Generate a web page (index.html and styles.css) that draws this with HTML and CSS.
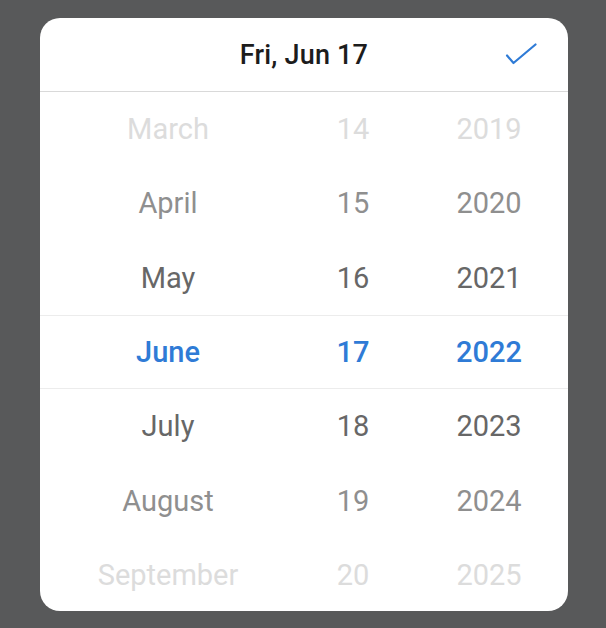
FILE: index.html
```html
<!DOCTYPE html>
<html>
<head>
<meta charset="utf-8">
<link rel="stylesheet" href="styles.css">
</head>
<body>
<div class="card">
  <div class="header">
    <div class="title">Fri, Jun 17</div>
    <svg class="check" width="32" height="24" viewBox="0 0 32 24">
      <path d="M2 12.5 L8.5 20 L30.5 1.5" fill="none" stroke="#2f7bd6" stroke-width="2.2" stroke-linecap="round" stroke-linejoin="round"/>
    </svg>
  </div>
  <div class="wheel">
    <div class="row far"><span>March</span><span>14</span><span>2019</span></div>
    <div class="row mid"><span>April</span><span>15</span><span>2020</span></div>
    <div class="row near"><span>May</span><span>16</span><span>2021</span></div>
    <div class="row sel"><span>June</span><span>17</span><span>2022</span></div>
    <div class="row near"><span>July</span><span>18</span><span>2023</span></div>
    <div class="row mid"><span>August</span><span>19</span><span>2024</span></div>
    <div class="row far"><span>September</span><span>20</span><span>2025</span></div>
  </div>
</div>
</body>
</html>
```
FILE: styles.css
```css
html, body {
  margin: 0;
  padding: 0;
  background: #58595a;
}
body {
  width: 606px;
  height: 628px;
  padding: 18px 0 0 40px;
  box-sizing: border-box;
  font-family: Roboto, "Noto Sans", sans-serif;
}
.card {
  width: 528px;
  height: 593px;
  background: #ffffff;
  border-radius: 20px;
  overflow: hidden;
}
.header {
  position: relative;
  height: 73px;
  border-bottom: 1px solid #d9d9d9;
  display: flex;
  align-items: center;
  justify-content: center;
}
.title {
  font-size: 27px;
  font-weight: 500;
  color: #1c1c1c;
  letter-spacing: 0.2px;
}
.check {
  position: absolute;
  left: 465px;
  top: 25px;
}
.wheel {
  display: flex;
  flex-direction: column;
}
.row {
  height: 74.3px;
  display: grid;
  grid-template-columns: 256px 114px 158px;
  align-items: center;
  font-size: 29px;
  box-sizing: border-box;
}
.row span {
  text-align: center;
}
.far { color: #dcdcdc; }
.mid { color: #8f8f8f; }
.near { color: #676767; }
.sel {
  color: #2f7bd6;
  font-weight: 500;
  border-top: 1px solid #ececec;
  border-bottom: 1px solid #ececec;
}
```
